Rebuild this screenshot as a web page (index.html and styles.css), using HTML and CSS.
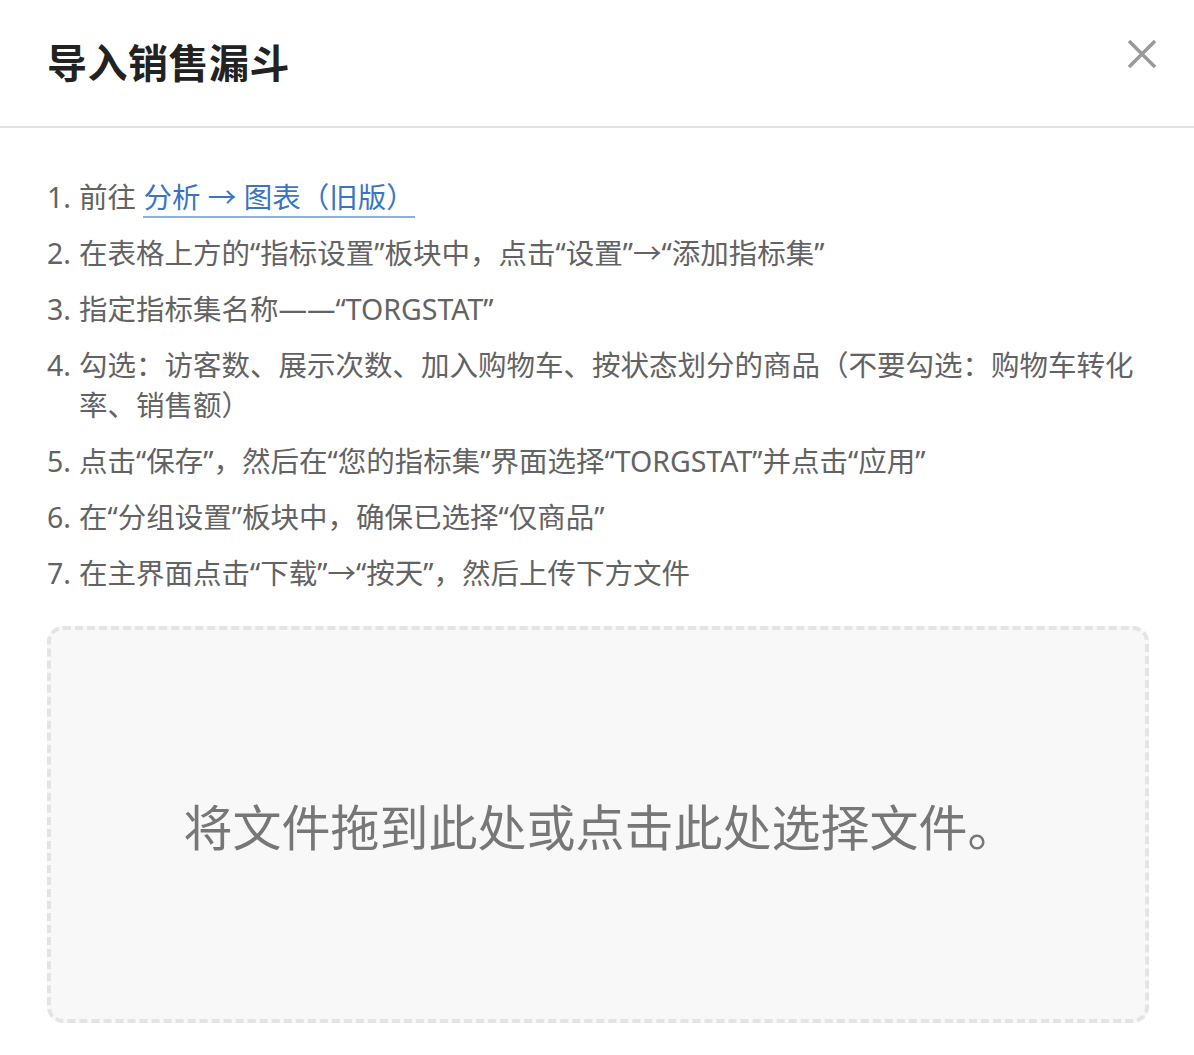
FILE: index.html
```html
<!DOCTYPE html>
<html lang="zh-CN">
<head>
    <meta charset="UTF-8">
    <meta name="viewport" content="width=device-width, initial-scale=1.0">
    <title>导入销售漏斗</title>
    <link rel="stylesheet" href="styles.css">
</head>
<body>
    <div class="modal">
        <!-- Header -->
        <div class="modal-header">
            <h1 class="modal-title">导入销售漏斗</h1>
            <button class="close-btn" aria-label="关闭">
                <svg width="30" height="30" viewBox="0 0 30 30">
                    <path d="M2 2 L28 28 M28 2 L2 28" stroke="#999" stroke-width="3.5" fill="none"/>
                </svg>
            </button>
        </div>

        <!-- Steps -->
        <div class="modal-body">
            <ol class="steps">
                <li><span class="num">1.</span><span class="text">前往 <a href="#" class="link">分析 → 图表（旧版）</a></span></li>
                <li><span class="num">2.</span><span class="text">在表格上方的“指标设置”板块中，点击“设置”→“添加指标集”</span></li>
                <li><span class="num">3.</span><span class="text">指定指标集名称——“TORGSTAT”</span></li>
                <li><span class="num">4.</span><span class="text">勾选：访客数、展示次数、加入购物车、按状态划分的商品（不要勾选：购物车转化率、销售额）</span></li>
                <li><span class="num">5.</span><span class="text">点击“保存”，然后在“您的指标集”界面选择“TORGSTAT”并点击“应用”</span></li>
                <li><span class="num">6.</span><span class="text">在“分组设置”板块中，确保已选择“仅商品”</span></li>
                <li><span class="num">7.</span><span class="text">在主界面点击“下载”→“按天”，然后上传下方文件</span></li>
            </ol>

            <!-- Upload area -->
            <label class="dropzone">
                <input type="file" class="file-input">
                <span class="dropzone-text">将文件拖到此处或点击此处选择文件。</span>
            </label>
        </div>
    </div>
</body>
</html>
```

FILE: styles.css
```css
/* Base */
body {
    margin: 0;
    padding: 0;
    background: #fff;
    font-family: "Noto Sans", "Noto Sans CJK SC", sans-serif;
    color: #636363;
}

/* Modal header */
.modal-header {
    display: flex;
    align-items: center;
    justify-content: space-between;
    height: 126px;
    padding: 0 37px 0 47px;
    border-bottom: 2px solid #e2e2e2;
}

.modal-title {
    margin: 0;
    font-size: 40px;
    font-weight: 700;
    color: #222;
    line-height: 1;
    letter-spacing: 0.5px;
}

.close-btn {
    background: none;
    border: none;
    padding: 0;
    width: 30px;
    height: 30px;
    cursor: pointer;
    margin-top: -18px;
}

/* Body */
.modal-body {
    padding: 49px 45px 0 47px;
}

.steps {
    list-style: none;
    margin: 0;
    padding: 0;
    font-size: 28.5px;
    line-height: 40px;
}

.steps li {
    display: flex;
    margin-bottom: 16px;
}

.steps li:last-child {
    margin-bottom: 0;
}

.num {
    flex: 0 0 32px;
}

.text {
    flex: 1;
}

.link {
    color: #3a74c2;
    text-decoration: none;
    border-bottom: 2px solid #8fb0db;
}

/* Upload area */
.dropzone {
    display: flex;
    align-items: center;
    justify-content: center;
    margin-top: 33px;
    height: 389px;
    background: #f8f8f8;
    border: 4px dashed #e4e4e4;
    border-radius: 16px;
    cursor: pointer;
}

.file-input {
    display: none;
}

.dropzone-text {
    font-size: 49px;
    color: #777;
    padding-left: 4px;
}
```
